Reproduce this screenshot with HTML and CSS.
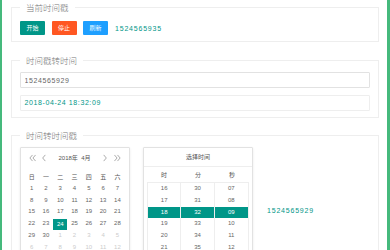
FILE: index.html
```html
<!DOCTYPE html>
<html lang="zh">
<head>
    <meta charset="UTF-8" />
    <title>时间戳转换</title>
    <link rel="stylesheet" href="styles.css">
</head>
<body>
<div class="page">
    <fieldset class="box box-now">
        <legend>当前时间戳</legend>
        <div class="btn-row">
            <button class="btn btn-start" type="button">开始</button>
            <button class="btn btn-stop" type="button">停止</button>
            <button class="btn btn-refresh" type="button">刷新</button>
            <span class="stamp">1524565935</span>
        </div>
    </fieldset>

    <fieldset class="box box-conv">
        <legend>时间戳转时间</legend>
        <input class="field" type="text" value="1524565929" />
        <div class="field field-out">2018-04-24 18:32:09</div>
    </fieldset>

    <fieldset class="box box-pick">
        <legend>时间转时间戳</legend>
        <div class="pick-row">
            <!-- 日历 -->
            <div class="cal">
                <div class="cal-head">
                    <span class="nav nav-wide">
                        <svg width="7" height="8" viewBox="0 0 8 9"><path d="M4 1L1 4.5L4 8M7.5 1L4.5 4.5L7.5 8" /></svg>
                    </span>
                    <span class="nav">
                        <svg width="4" height="8" viewBox="0 0 4 9"><path d="M3.5 1L0.5 4.5L3.5 8" /></svg>
                    </span>
                    <span class="cal-title">2018年&nbsp;&nbsp;4月</span>
                    <span class="nav">
                        <svg width="4" height="8" viewBox="0 0 4 9"><path d="M0.5 1L3.5 4.5L0.5 8" /></svg>
                    </span>
                    <span class="nav nav-wide">
                        <svg width="7" height="8" viewBox="0 0 8 9"><path d="M0.5 1L3.5 4.5L0.5 8M4 1L7 4.5L4 8" /></svg>
                    </span>
                </div>
                <div class="cal-body" id="cal-body">
                    <span class="wk">日</span><span class="wk">一</span><span class="wk">二</span>
                    <span class="wk">三</span><span class="wk">四</span><span class="wk">五</span>
                    <span class="wk">六</span>
                </div>
            </div>

            <!-- 时间选择 -->
            <div class="time">
                <div class="time-title">选择时间</div>
                <div class="time-head">
                    <span>时</span><span>分</span><span>秒</span>
                </div>
                <div class="time-list" id="time-list"></div>
            </div>

            <span class="stamp stamp-result">1524565929</span>
        </div>
    </fieldset>
</div>

<script>
    // 日历: 2018年4月, 1号是星期日
    const calBody = document.getElementById('cal-body');
    for (let i = 0; i < 42; i++) {
        const day = document.createElement('span');
        day.className = 'day';
        if (i < 30) {
            day.textContent = i + 1;
            if (i + 1 === 24) day.classList.add('on');
        } else {
            day.textContent = i - 29;
            day.classList.add('other');
        }
        calBody.appendChild(day);
    }

    // 时 / 分 / 秒 列表
    const timeList = document.getElementById('time-list');
    const cols = [
        ['16', '17', '18', '19', '20', '21'],
        ['30', '31', '32', '33', '34', '35'],
        ['07', '08', '09', '10', '11', '12']
    ];
    cols.forEach(values => {
        const col = document.createElement('div');
        col.className = 'time-col';
        values.forEach((v, idx) => {
            const item = document.createElement('div');
            item.className = 'time-item';
            if (idx === 2) item.classList.add('on');
            item.textContent = v;
            col.appendChild(item);
        });
        timeList.appendChild(col);
    });
</script>
</body>
</html>
```

FILE: styles.css
```css
/* Reset */
* {
    box-sizing: border-box;
    margin: 0;
    padding: 0;
}

body {
    font-family: "Liberation Sans", "Noto Sans CJK SC", sans-serif;
    background: #fff;
    color: #666;
}

.page {
    height: 250px;
    overflow: hidden;
    border-left: 2px solid #45b97c;
    border-right: 3px solid #45b97c;
    padding: 0 8px 0 9px;
}

/* Fieldsets */
.box {
    border: 1px solid #eee;
    padding: 6px 8px 6px 8px;
    min-width: 0;
}

.box legend {
    padding: 0 6px;
    font-family: "Noto Sans CJK SC", sans-serif;
    font-size: 8.5px;
    font-weight: 300;
    line-height: 15px;
    color: #777;
}

.box-conv {
    margin-top: 11px;
    padding-top: 4px;
}

.box-pick {
    margin-top: 10px;
    padding-top: 4px;
    padding-bottom: 0;
}

/* Buttons */
.btn-row {
    display: flex;
    align-items: center;
    gap: 6.5px;
}

.btn {
    width: 25px;
    height: 14px;
    border: none;
    border-radius: 1px;
    color: #fff;
    font-family: "Noto Sans CJK SC", sans-serif;
    font-size: 6px;
    line-height: 14px;
    cursor: pointer;
}

.btn-start { background-color: #009688; }
.btn-stop { background-color: #ff5722; }
.btn-refresh { background-color: #1e9fff; }

.stamp {
    margin-left: 0.5px;
    font-size: 7px;
    letter-spacing: 0.8px;
    color: #009688;
}

/* Inputs */
.field {
    display: block;
    width: 100%;
    height: 16px;
    padding-left: 3.5px;
    border: 1px solid #e2e2e2;
    border-radius: 1px;
    font-family: "Liberation Sans", sans-serif;
    font-size: 7px;
    line-height: 14px;
    letter-spacing: 0.6px;
    color: #666;
    background: #fff;
    outline: none;
}

.field-out {
    margin-top: 7px;
    border-color: #eee;
    color: #009688;
}

/* Date/time picker */
.pick-row {
    display: flex;
    align-items: flex-start;
}

.cal,
.time {
    width: 110px;
    border: 1px solid #e2e2e2;
    border-radius: 1px;
    background: #fff;
    box-shadow: 0 1px 3px rgba(0,0,0,0.08);
    height: 120px;
}

.cal-head {
    display: flex;
    align-items: center;
    height: 19px;
    padding-left: 3.5px;
}

.nav {
    width: 9px;
    display: flex;
    justify-content: center;
    align-items: center;
}

.nav-wide {
    width: 15px;
}

.nav svg path {
    fill: none;
    stroke: #888;
    stroke-width: 0.8;
}

.cal-title {
    width: 52px;
    text-align: center;
    font-family: "Liberation Sans", "Noto Sans CJK SC", sans-serif;
    font-size: 6px;
    color: #555;
}

.cal-body {
    display: grid;
    grid-template-columns: repeat(7, 14.3px);
    grid-auto-rows: 11.8px;
    padding: 4px 4px 0 3.5px;
    font-size: 6px;
    line-height: 11.8px;
    text-align: center;
}

.wk {
    font-family: "Noto Sans CJK SC", sans-serif;
    color: #555;
}

.day {
    color: #666;
}

.day.other {
    color: #ccc;
}

.day.on {
    background-color: #009688;
    color: #fff;
    line-height: 11px;
    height: 11px;
    margin-top: 0.5px;
}

.time {
    margin-left: 13px;
}

.time-title {
    height: 19px;
    line-height: 18px;
    border-bottom: 1px solid #eee;
    text-align: center;
    font-family: "Noto Sans CJK SC", sans-serif;
    font-size: 6px;
    color: #555;
}

.time-head {
    display: grid;
    grid-template-columns: repeat(3, 1fr);
    padding: 0 3px;
    height: 15px;
    line-height: 15px;
    text-align: center;
    font-family: "Noto Sans CJK SC", sans-serif;
    font-size: 6px;
    color: #555;
}

.time-list {
    display: grid;
    grid-template-columns: repeat(3, 1fr);
    margin: 0 3px;
    border: 1px solid #eee;
}

.time-col {
    border-right: 1px solid #eee;
}

.time-col:last-child {
    border-right: none;
}

.time-item {
    height: 11.8px;
    line-height: 11.8px;
    text-align: center;
    font-size: 6px;
    color: #666;
}

.time-item.on {
    background-color: #009688;
    color: #fff;
}

.stamp-result {
    margin-top: 59px;
    margin-left: 14px;
    line-height: 10px;
}
```
